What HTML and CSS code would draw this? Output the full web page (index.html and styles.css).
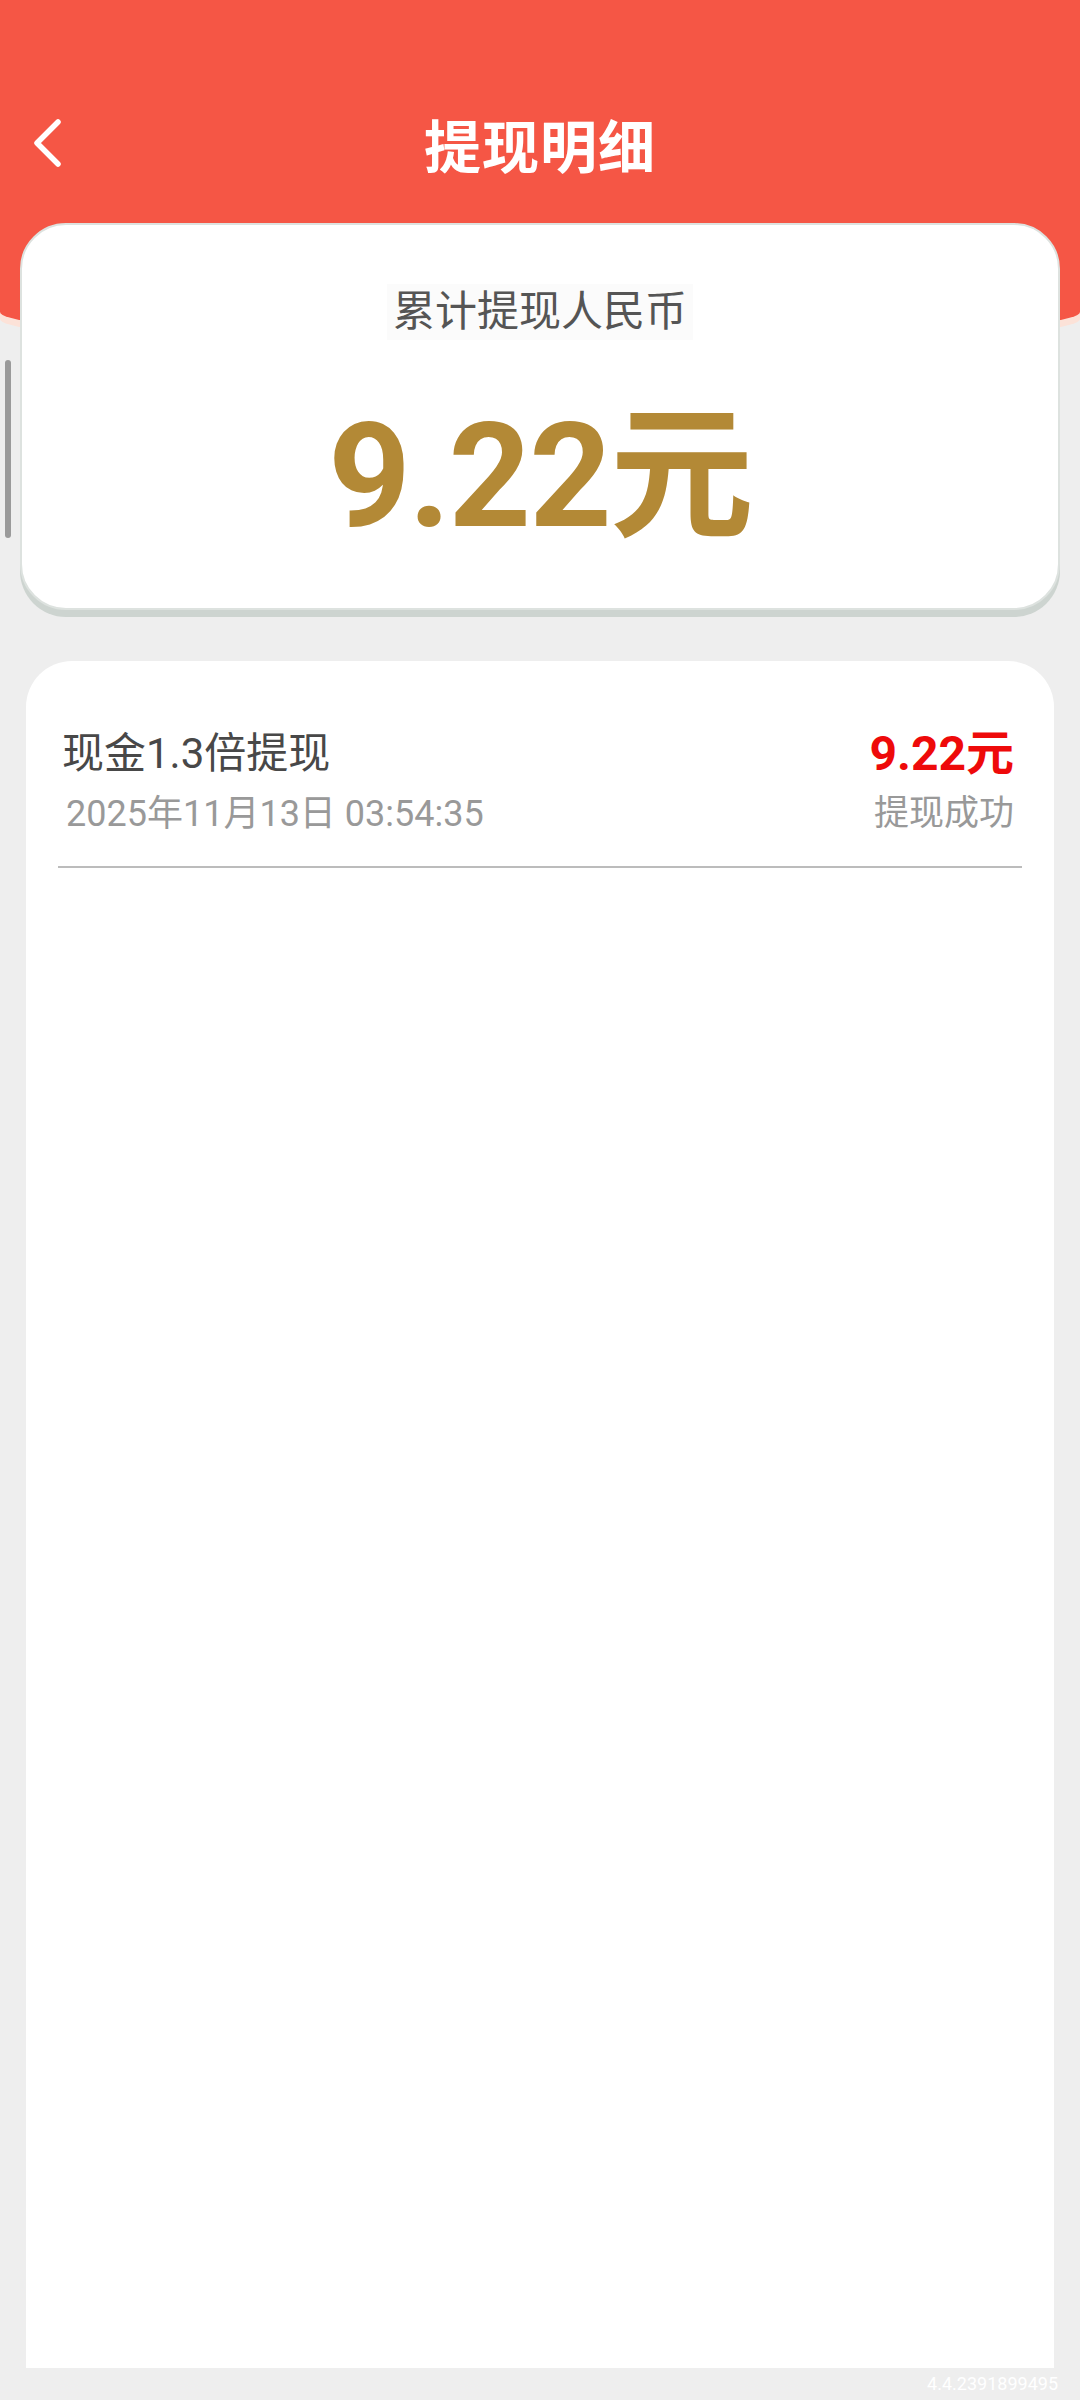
FILE: index.html
```html
<!DOCTYPE html>
<html lang="zh-CN">
<head>
  <meta charset="UTF-8">
  <title>提现明细</title>
<link rel="stylesheet" href="styles.css">
</head>
<body>
<div class="page">
  <div class="top">
    <div class="status"></div>
    <div class="nav">
      <a class="back">
        <svg width="30" height="50" viewBox="0 0 30 50"><path d="M26 4 L5 25 L26 46" fill="none" stroke="#fff" stroke-width="5.5" stroke-linecap="round" stroke-linejoin="round"/></svg>
      </a>
      <div class="title">提现明细</div>
      <div></div>
    </div>
    <div class="summary">
      <div class="summary-label">累计提现人民币</div>
      <div class="summary-amount">9.22元</div>
    </div>
  </div>

  <div class="records">
    <div class="item">
      <div class="item-name">现金1.3倍提现</div>
      <div class="item-money">9.22元</div>
      <div class="item-time">2025年11月13日 03:54:35</div>
      <div class="item-state">提现成功</div>
    </div>
  </div>

  <div class="footer">4.4.2391899495</div>
  <div class="scrollbar"></div>
</div>
</body>
</html>
```

FILE: styles.css
```css
* {
  box-sizing: border-box;
}
body {
  margin: 0;
  background: #eeeeee;
  font-family: Roboto, "Noto Sans CJK SC", sans-serif;
}
.page {
  position: relative;
  min-height: 100vh;
  display: flex;
  flex-direction: column;
}
.top {
  position: relative;
}
/* 红色头部背景，底部带弧度 */
.top::before {
  content: '';
  position: absolute;
  left: 0;
  right: 0;
  top: 0;
  height: 342px;
  background: #f55645;
  border-radius: 0 0 50% 50% / 0 0 30px 30px;
  box-shadow: 0 7px 0 #fce2d8;
}
.status {
  height: 70px;
}
.nav {
  position: relative;
  height: 146px;
  display: grid;
  grid-template-columns: 1fr auto 1fr;
  align-items: center;
}
.back {
  display: flex;
  padding-left: 32px;
}
.title {
  color: #fff;
  font-size: 57px;
  font-weight: bold;
  letter-spacing: 1px;
}
.summary {
  position: relative;
  margin: 7px 20px 0;
  padding: 59px 0 58px;
  background: #fff;
  border: 2px solid #dde2df;
  border-radius: 46px;
  box-shadow: 0 7px 0 #cdd4d0;
  text-align: center;
}
.summary-label {
  display: inline-block;
  padding: 0 6px;
  font-size: 42px;
  line-height: 56px;
  color: #555;
  background: #fbfbfb;
}
.summary-amount {
  margin-top: 64px;
  font-size: 144px;
  line-height: 146px;
  font-weight: bold;
  letter-spacing: -2px;
  color: #b38936;
}
.records {
  flex: 1;
  margin: 51px 26px 0;
  background: #fff;
  border-radius: 46px 46px 0 0;
}
.item {
  margin: 0 32px;
  padding: 65px 8px 28px 4px;
  border-bottom: 2px solid #bcbcbc;
  display: grid;
  grid-template-columns: 1fr auto;
  row-gap: 8px;
}
.item-name {
  font-size: 42px;
  line-height: 56px;
  color: #484848;
}
.item-money {
  font-size: 48px;
  line-height: 56px;
  font-weight: bold;
  color: #ee0a0a;
  text-align: right;
}
.item-time,
.item-state {
  font-size: 35px;
  line-height: 48px;
  color: #999;
}
.item-time {
  padding-left: 4px;
  font-size: 36px;
}
.item-state {
  text-align: right;
}
.footer {
  height: 32px;
  padding-right: 22px;
  text-align: right;
  font-size: 18px;
  line-height: 32px;
  color: #fff;
}
.scrollbar {
  position: absolute;
  left: 5px;
  top: 360px;
  width: 6px;
  height: 178px;
  border-radius: 3px;
  background: #9a9a9a;
}
```
